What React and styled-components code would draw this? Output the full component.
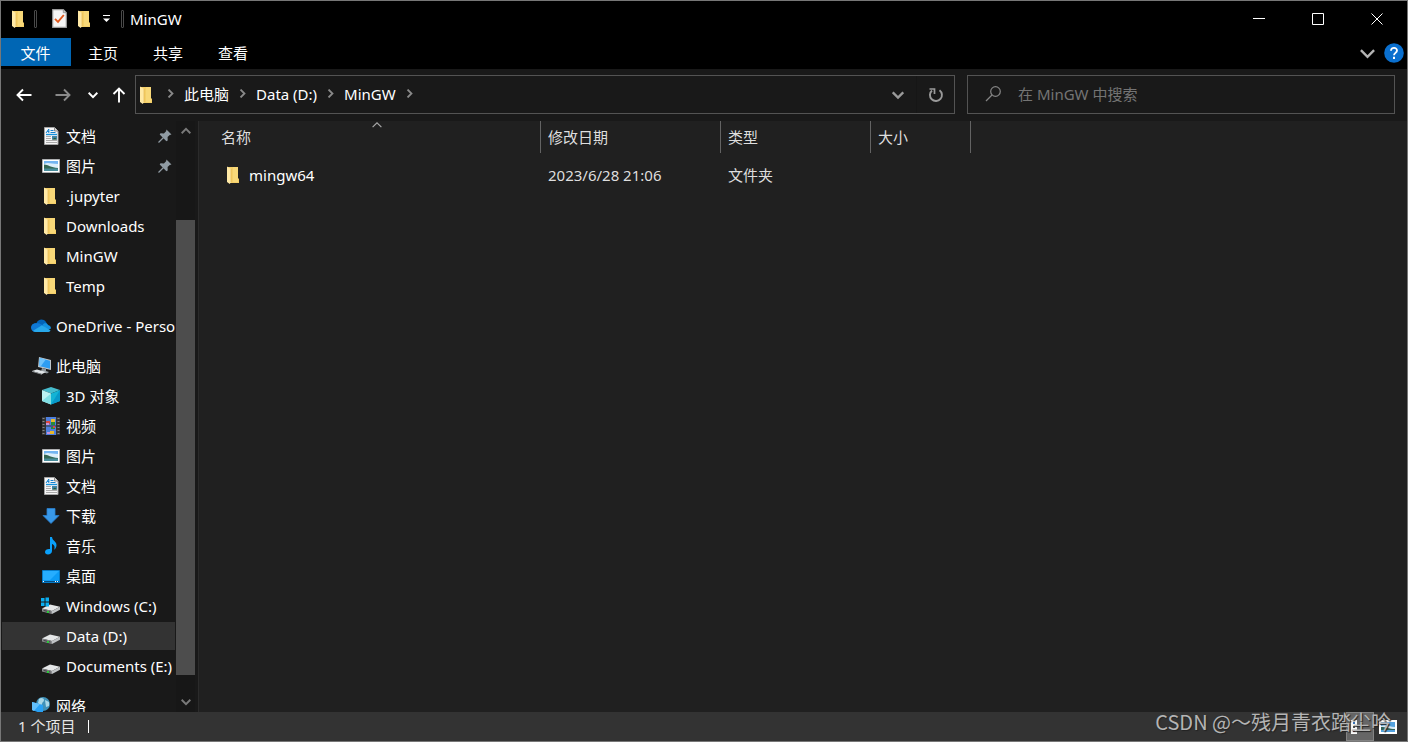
import React from "react";
import styled, { createGlobalStyle, css } from "styled-components";

const GlobalStyle = createGlobalStyle`
  * {
    box-sizing: border-box;
  }

  body {
    margin: 0;
    background: #202020;
  }

  body,
  button,
  input {
    font-family: "Noto Sans", "Noto Sans CJK SC", sans-serif;
    font-size: 15px;
    line-height: 20px;
    color: #ffffff;
  }

  svg {
    display: block;
    flex-shrink: 0;
  }
`;

const Window = styled.div`
  position: relative;
  display: flex;
  flex-direction: column;
  height: 100vh;
  border: 1px solid #777777;
  background: #202020;
  overflow: hidden;
`;

const PlainButton = styled.button`
  display: flex;
  align-items: center;
  justify-content: center;
  padding: 0;
  border: 0;
  background: none;
`;

const TitleBar = styled.header`
  display: flex;
  flex-shrink: 0;
  height: 37px;
  background: #000000;
`;

const QuickAccess = styled.div`
  display: flex;
  flex: 1;
  align-items: center;
  padding: 0 0 2px 8px;
`;

const QuickButton = styled(PlainButton)`
  width: ${({ $width }) => $width || 20}px;
  height: 24px;
`;

const Grip = styled.span`
  width: 3px;
  height: 18px;
  margin: 0 ${({ $right }) => $right}px 0 ${({ $left }) => $left}px;
  border: 1px solid #4a4a4a;
  border-radius: 1px;
`;

const Title = styled.h1`
  margin: 0;
  font-size: 15px;
  line-height: 20px;
  font-weight: 400;
`;

const CaptionButton = styled(PlainButton)`
  width: 59px;
  height: 37px;
  padding: 0 1px 1px 0;
`;

const Ribbon = styled.nav`
  display: flex;
  flex-shrink: 0;
  height: 31px;
  background: #000000;
`;

const Tab = styled(PlainButton)`
  width: ${({ $active }) => ($active ? 70 : 65)}px;
  height: 28px;
  padding: 2px 1px 0 0;
  background: ${({ $active }) => ($active ? "#0066b4" : "none")};
`;

const RibbonTools = styled.div`
  display: flex;
  align-items: center;
  gap: 9px;
  height: 30px;
  margin-left: auto;
  padding-right: 3px;
`;

const Toolbar = styled.div`
  display: flex;
  flex-shrink: 0;
  align-items: center;
  height: 52px;
  padding: 0 12px 1px 3px;
  background: #191919;
`;

const NavButton = styled(PlainButton)`
  width: ${({ $width }) => $width}px;
  height: 39px;
`;

const fieldStyles = css`
  display: flex;
  align-items: center;
  height: 39px;
  border: 1px solid #535353;
`;

const AddressBar = styled.div`
  ${fieldStyles}
  flex: 1;
  min-width: 0;
  margin: 0 12px 0 1px;
  padding-left: 1px;
`;

const Crumbs = styled.ol`
  display: flex;
  flex: 1;
  align-items: center;
  min-width: 0;
  margin: 0;
  padding: 0 0 2px;
  overflow: hidden;
  list-style: none;
  white-space: nowrap;
`;

const Crumb = styled.li`
  display: flex;
  align-items: center;
`;

const CrumbLink = styled.a`
  color: #ffffff;
  text-decoration: none;
`;

const CrumbArrow = styled.span`
  display: flex;
  justify-content: center;
  width: 27px;
`;

const AddressButton = styled(PlainButton)`
  width: 38px;
  height: 37px;
  border-left: 1px solid ${({ $divided }) => ($divided ? "#161616" : "transparent")};
`;

const SearchBox = styled.label`
  ${fieldStyles}
  flex: 0 1 428px;
  gap: 16px;
  padding: 0 16px 2px;
`;

const SearchInput = styled.input`
  flex: 1;
  min-width: 0;
  height: 24px;
  padding: 0;
  border: 0;
  outline: 0;
  background: none;

  &::placeholder {
    color: #747474;
    opacity: 1;
  }
`;

const Main = styled.div`
  display: flex;
  flex: 1;
  min-height: 0;
`;

const Sidebar = styled.aside`
  display: flex;
  flex-shrink: 0;
  width: 198px;
  border-right: 1px solid #2b2b2b;
  background: #191919;
`;

const Tree = styled.div`
  display: flex;
  flex: 1;
  flex-direction: column;
  gap: 10px;
  min-width: 0;
  overflow: hidden;
`;

const TreeGroup = styled.ul`
  flex-shrink: 0;
  margin: 0;
  padding: 0;
  list-style: none;
`;

const TreeItem = styled.li`
  padding: 1px;
`;

const TreeLink = styled.a`
  display: flex;
  align-items: center;
  gap: 5px;
  height: 28px;
  padding-left: ${({ $nested }) => ($nested ? 39 : 29)}px;
  background: ${({ $selected }) => ($selected ? "#333333" : "none")};
  color: #ffffff;
  text-decoration: none;
  white-space: nowrap;
`;

const PinSlot = styled.span`
  margin: 0 3px 0 auto;
`;

const Scrollbar = styled.div`
  display: flex;
  flex-direction: column;
  width: 19px;
  margin-right: 3px;
  background: #171717;
`;

const ScrollButton = styled(PlainButton)`
  height: 20px;
`;

const Track = styled.div`
  display: flex;
  flex: 1;
  flex-direction: column;
`;

const TrackSpace = styled.div`
  flex: ${({ $share }) => $share};
`;

const Thumb = styled.div`
  flex: 455;
  background: #4d4d4d;
`;

const Content = styled.main`
  flex: 1;
  min-width: 0;
  padding-left: 15px;
`;

const FileTable = styled.table`
  table-layout: fixed;
  width: 757px;
  border-collapse: separate;
  border-spacing: 0;
  color: #dedede;
`;

const HeadCell = styled.th`
  position: relative;
  width: ${({ $width }) => $width}px;
  height: 32px;
  padding: 0 0 0 7px;
  border-right: 1px solid #636363;
  font-weight: 400;
  text-align: left;
`;

const SortMark = styled.span`
  position: absolute;
  top: -1px;
  left: 0;
  right: 0;
  display: flex;
  justify-content: center;
`;

const Cell = styled.td`
  height: 44px;
  padding: 0 0 0 7px;
`;

const FileName = styled.a`
  display: flex;
  align-items: center;
  gap: 5px;
  padding-left: 3px;
  color: #ffffff;
  text-decoration: none;
`;

const StatusBar = styled.footer`
  display: flex;
  flex-shrink: 0;
  align-items: center;
  height: 29px;
  padding: 0 5px 0 17px;
  background: #333333;
`;

const Count = styled.span`
  padding: 0 13px 2px 0;
  color: #e6e6e6;
`;

const StatusDivider = styled.span`
  width: 1px;
  height: 13px;
  margin-right: auto;
  background: #ffffff;
`;

const ViewButton = styled(PlainButton)`
  width: 28px;
  height: 29px;
  border: 1px solid ${({ $active }) => ($active ? "#838383" : "transparent")};
  background: ${({ $active }) => ($active ? "#666666" : "none")};
`;

const Watermark = styled.span`
  position: absolute;
  right: 16px;
  bottom: 5px;
  font-family: "Noto Sans CJK SC", sans-serif;
  font-size: 20px;
  line-height: 28px;
  color: #b4b4b4;
  text-shadow: 1px 1px 1px #222222;
  white-space: nowrap;
  pointer-events: none;
`;

const Chevron = ({ direction = "right", size = 9, color = "#8a8a8a", weight = 2 }) => {
  const turn = { right: 0, down: 90, up: -90 }[direction];
  return (
    <svg width={size} height={size} viewBox="0 0 10 10">
      <path
        d="M2.8.6 7.2 5 2.8 9.4"
        transform={`rotate(${turn} 5 5)`}
        fill="none"
        stroke={color}
        strokeWidth={weight}
      />
    </svg>
  );
};

const FolderIcon = () => (
  <svg width="20" height="20" viewBox="0 0 20 20">
    <path d="M3 2h11v11.5h1v4.500H5z" fill="#f4cf68" />
    <path d="M9 2h5v15H9z" fill="#f8d878" />
    <path d="M3 1.5 7 4v13l-1.200 2L3 17z" fill="#ffe9a6" />
    <path d="M7 4v13" stroke="#dfae48" strokeWidth=".6" />
  </svg>
);

const CheckPageIcon = () => (
  <svg width="15" height="19" viewBox="0 0 15 19">
    <path d="M.7.7h10.6l3 3v14.6H.7z" fill="#f5f5f5" stroke="#9b9b9b" strokeWidth="1.2" />
    <path d="M11.3.7v3h3" fill="#ccc" stroke="#8d8d8d" strokeWidth=".8" />
    <path d="m3 9.8 3 3L11.8 6" fill="none" stroke="#e2581c" strokeWidth="1.9" />
  </svg>
);

const DocumentIcon = () => (
  <svg width="20" height="20" viewBox="0 0 20 20">
    <path d="M3.500 1.500h10L17 5v13.500H3.500z" fill="#f7f7f7" stroke="#a5a5a5" />
    <path d="M13.500 1.500V5H17" fill="#d5d5d5" stroke="#777" strokeWidth=".8" />
    <path d="m5 7 2.800-4v4M6.200 5.500h2M9.500 4.500h3M9.500 6.500h5" fill="none" stroke="#1582ce" />
    <path d="M5 8.500h11" stroke="#1593df" strokeWidth="1.400" />
    <path d="M5 10.500h5M5 12.500h5M5 14.500h11M5 16.500h11" stroke="#a2a2a2" strokeWidth=".9" />
    <path d="M11 10h5v3.500h-5z" fill="#3f86aa" />
    <path d="m11 13.500 3-2 2 2z" fill="#285936" />
  </svg>
);

const PictureIcon = () => (
  <svg width="20" height="20" viewBox="0 0 20 20">
    <path d="M1.500 3.500h17v13h-17z" fill="#fff" stroke="#aeb0b2" />
    <path d="M3 5h14v10H3z" fill="#74b5f2" />
    <path d="M3 8c4-2 7 0 14 0v4H3z" fill="#dceefb" />
    <path d="M3 8.500c4 .2 7 3 14 3.500v1.500H3z" fill="#356855" />
    <path d="M3 12.500h14V15H3z" fill="#488d9b" />
  </svg>
);

const CloudIcon = () => (
  <svg width="20" height="20" viewBox="0 0 20 20">
    <path d="M1 12.5C0 9 3 6.5 5.5 7 7 3.5 12 2 15 6l1 2-9 8H4c-2 0-3-1.5-3-3.500z" fill="#0364b8" />
    <path d="M5 7.500c3-1 5 .5 7 2L3 15.500C1 15 0 13 0 11.500 0 9 2 7.300 5 7.500z" fill="#0f78d4" />
    <path d="M11.500 9c1-2.500 5-2 5.500 0 2 .2 3 2 3 3.500l-4 2z" fill="#1490df" />
    <path d="m2 14.800 9-5.500 8.600 5.200c-.7 1-1.800 1.500-3 1.500H5c-1.200 0-2.200-.4-3-1.200z" fill="#28a8ea" />
  </svg>
);

const ComputerIcon = () => (
  <svg width="20" height="20" viewBox="0 0 20 20">
    <path d="m8 1 12 3v10L7 11z" fill="#c0c7cc" />
    <path d="m8.800 2 10.200 2.700v8L8 10z" fill="#2d9df2" />
    <path d="m8.800 2 6 1.500-5 6.800L8 10z" fill="#70c3fb" />
    <path d="m11 12 4 1v2l3 1-2 1.500-6-2z" fill="#929a9f" />
    <path d="m1 15 5-1.500 9 2.500-4 2z" fill="#e1e5e8" />
    <path d="m1 15 10 3v.8L1 15.800z" fill="#9ba0a4" />
  </svg>
);

const CubeIcon = () => (
  <svg width="20" height="20" viewBox="0 0 20 20">
    <path d="m10 1 9 3-9 3.500L1 4z" fill="#46bccd" />
    <path d="m1 4 9 3.500v11L1 15z" fill="#bbf2f2" />
    <path d="m1 15 9-7.500v11z" fill="#81dfe4" />
    <path d="m19 4-9 3.500v11l9-3.500z" fill="#13b3d5" />
    <path d="m19 4-9 14.500 9-3.500z" fill="#0798c9" />
  </svg>
);

const FilmIcon = () => (
  <svg width="20" height="20" viewBox="0 0 20 20">
    <path d="M1 1h18v18H1z" fill="#333" />
    <path d="M2.500 2v16M17.500 2v16" stroke="#858585" strokeWidth="2" strokeDasharray="1 2" />
    <path d="M5 1h10v8.500H5zM5 10.500h10V19H5z" fill="#4e7fdc" />
    <path d="M10 3h4v3h-4zM9 15h4v3H9z" fill="#e9b82c" />
    <path d="M10 6h4v3h-4zM10 11h4v2h-4z" fill="#278b38" />
    <path d="M5 5h4v3H5zM12 10h2v2h-2z" fill="#d84a41" />
    <path d="M5 7h3v2H5zM6 16h3v2H6z" fill="#c693d9" />
  </svg>
);

const DownloadIcon = () => (
  <svg width="20" height="20" viewBox="0 0 20 20">
    <path d="M6 2.500h8v7h4L10 17.500 2 9.500h4z" fill="#3898e8" stroke="#2a7fce" strokeWidth=".8" />
  </svg>
);

const MusicIcon = () => (
  <svg width="20" height="20" viewBox="0 0 20 20">
    <path
      d="M9 1h2c.4 4 4.500 4.300 4.500 8 0 2-1 4-2.200 4.700.8-3.700-.3-5-2.300-5.700V15c0 2-2 3.500-4 3.500S4 17.500 4 16c0-2 2.500-3.400 5-2.900z"
      fill="#0aa0fa"
    />
  </svg>
);

const DesktopIcon = () => (
  <svg width="20" height="20" viewBox="0 0 20 20">
    <path d="M1.500 4.500h17v12h-17z" fill="#0c9bf5" stroke="#067bc9" />
    <path d="M2 5h16L9 14H2z" fill="#26adff" />
    <path d="M2 15.500h16" stroke="#064b7c" />
    <path d="M2 15.500h1M14 15.500h1M16 15.500h1" stroke="#fff" />
  </svg>
);

const DriveIcon = ({ windows }) => (
  <svg width="20" height="20" viewBox="0 0 20 20">
    <path d="m1 12.500 8-4 10 2.200-8 4.300z" fill="#e5e7e8" />
    <path d="m1 12.500 10 2.500v3L1 15.500z" fill="#8b8d8f" />
    <path d="m19 10.700-8 4.300v3l8-4.300z" fill="#c1c4c6" />
    <path d="m2.500 13.800 7 1.800v1.200l-7-1.800z" fill="#454749" />
    <path d="M6 14.900h2V17H6z" fill="#2fc83b" />
    {windows && (
      <path d="M0 2h3.500v3.500H0zM4.500 1.500H8v4H4.500zM0 6.500h3.500V10H0zM4.500 6.500H8v4H4.500z" fill="#0aaef0" />
    )}
  </svg>
);

const NetworkIcon = () => (
  <svg width="20" height="20" viewBox="0 0 20 20">
    <circle cx="12" cy="8" r="7" fill="#3f91b9" />
    <path d="M8 3c2-2 5-1 5 1s-2 2-2 4-3 1-4-1zM14 4l4 2v4l-3 1z" fill="#a9d7e7" />
    <path d="m1 6 11 3v9L1 14z" fill="#28a0f4" />
    <path d="m1 6 8 2-6 7-2-1z" fill="#61bffb" />
  </svg>
);

const PinIcon = () => (
  <svg width="14" height="14" viewBox="0 0 14 14">
    <path d="m8.500.5 5 5-1.800.4-2.100 2.200.1 3.400-1.300.8-6.700-6.700.8-1.300 3.400.1 2.200-2.100z" fill="#909ba3" />
    <path d="M5.500 8.500.5 13.500" stroke="#909ba3" strokeWidth="1.300" />
  </svg>
);

const ArrowIcon = ({ up, flip, color = "#ffffff" }) => (
  <svg width="16" height="16" viewBox="0 0 16 16">
    <path
      d="M15.500 8H1.500M7 2.500 1.500 8 7 13.500"
      transform={up ? "rotate(90 8 8)" : flip ? "rotate(180 8 8)" : undefined}
      fill="none"
      stroke={color}
      strokeWidth="1.900"
    />
  </svg>
);

const MenuArrowIcon = () => (
  <svg width="7" height="8" viewBox="0 0 7 8">
    <path d="M0 .5h7" stroke="#fff" />
    <path d="M0 3.500h7L3.500 7z" fill="#fff" />
  </svg>
);

const RefreshIcon = () => (
  <svg width="16" height="16" viewBox="0 0 16 16">
    <path d="M11.500 3.200A6 6 0 1 1 4 3.500" fill="none" stroke="#9a9a9a" strokeWidth="1.900" />
    <path d="M1.500 2h5v5" fill="none" stroke="#9a9a9a" strokeWidth="1.700" />
  </svg>
);

const SearchIcon = () => (
  <svg width="18" height="18" viewBox="0 0 18 18">
    <circle cx="11.500" cy="6.500" r="4.800" fill="none" stroke="#858585" strokeWidth="1.200" />
    <path d="m8 10-6 6" stroke="#858585" strokeWidth="1.300" />
  </svg>
);

const HelpIcon = () => (
  <svg width="20" height="20" viewBox="0 0 20 20">
    <circle cx="10" cy="10" r="9.800" fill="#0a6fce" />
    <path
      d="M7 7.700c0-4 6.200-3.500 6 0-.2 2.200-3 2.200-3 4.600"
      fill="none"
      stroke="#fff"
      strokeWidth="1.800"
    />
    <path d="M9 13.800h2V16H9z" fill="#fff" />
  </svg>
);

const CaptionIcon = ({ d }) => (
  <svg width="12" height="12" viewBox="0 0 12 12">
    <path d={d} fill="none" stroke="#ffffff" />
  </svg>
);

const DetailsIcon = () => (
  <svg width="18" height="16" viewBox="0 0 18 16">
    <path d="M0 1h6v14H0z" fill="#f8f8f8" />
    <path d="M2 3h2v2H2z" fill="#3b74b4" />
    <path d="M2 7h2v2H2z" fill="#505050" />
    <path d="M2 11h2v2H2z" fill="#c6382d" />
  </svg>
);

const LargeIconsIcon = () => (
  <svg width="18" height="14" viewBox="0 0 18 14">
    <path d="M0 0h18v14H0z" fill="#fff" />
    <path d="M2 2h14v10H2z" fill="#55a3df" />
    <path d="M2 6c5-2 8 1 14 1v2H2z" fill="#d7e9f5" />
    <path d="M2 7c5 0 8 2 14 2v1H2z" fill="#2f6257" />
  </svg>
);

const groups = [
  [
    { label: "文档", icon: <DocumentIcon />, pinned: true },
    { label: "图片", icon: <PictureIcon />, pinned: true },
    { label: ".jupyter", icon: <FolderIcon /> },
    { label: "Downloads", icon: <FolderIcon /> },
    { label: "MinGW", icon: <FolderIcon /> },
    { label: "Temp", icon: <FolderIcon /> },
  ],
  [{ label: "OneDrive - Personal", icon: <CloudIcon />, root: true }],
  [
    { label: "此电脑", icon: <ComputerIcon />, root: true },
    { label: "3D 对象", icon: <CubeIcon /> },
    { label: "视频", icon: <FilmIcon /> },
    { label: "图片", icon: <PictureIcon /> },
    { label: "文档", icon: <DocumentIcon /> },
    { label: "下载", icon: <DownloadIcon /> },
    { label: "音乐", icon: <MusicIcon /> },
    { label: "桌面", icon: <DesktopIcon /> },
    { label: "Windows (C:)", icon: <DriveIcon windows /> },
    { label: "Data (D:)", icon: <DriveIcon />, selected: true },
    { label: "Documents (E:)", icon: <DriveIcon /> },
  ],
  [{ label: "网络", icon: <NetworkIcon />, root: true }],
];

const columns = [
  { label: "名称", width: 327, sorted: true },
  { label: "修改日期", width: 180 },
  { label: "类型", width: 150 },
  { label: "大小", width: 100 },
];

const files = [{ name: "mingw64", modified: "2023/6/28 21:06", type: "文件夹", size: "" }];

const App = () => {
  return (
    <>
      <GlobalStyle />
      <Window>
        <TitleBar>
          <QuickAccess>
            <FolderIcon />
            <Grip $left={5} $right={12} />
            <QuickButton aria-label="属性">
              <CheckPageIcon />
            </QuickButton>
            <QuickButton $width={31} aria-label="新建文件夹">
              <FolderIcon />
            </QuickButton>
            <QuickButton $width={12} aria-label="自定义快速访问工具栏">
              <MenuArrowIcon />
            </QuickButton>
            <Grip $left={9} $right={6} />
            <Title>MinGW</Title>
          </QuickAccess>
          <CaptionButton aria-label="最小化">
            <CaptionIcon d="M0 5.500h12" />
          </CaptionButton>
          <CaptionButton aria-label="最大化">
            <CaptionIcon d="M.5.5h11v11H.5z" />
          </CaptionButton>
          <CaptionButton aria-label="关闭">
            <CaptionIcon d="m.5.5 11 11M11.500.5l-11 11" />
          </CaptionButton>
        </TitleBar>

        <Ribbon>
          <Tab $active>文件</Tab>
          <Tab>主页</Tab>
          <Tab>共享</Tab>
          <Tab>查看</Tab>
          <RibbonTools>
            <PlainButton aria-label="展开功能区">
              <Chevron direction="down" size={15} color="#b4b4b4" weight={1.6} />
            </PlainButton>
            <PlainButton aria-label="帮助">
              <HelpIcon />
            </PlainButton>
          </RibbonTools>
        </Ribbon>

        <Toolbar>
          <NavButton $width={39} aria-label="后退">
            <ArrowIcon />
          </NavButton>
          <NavButton $width={39} aria-label="前进">
            <ArrowIcon flip color="#8a8a8a" />
          </NavButton>
          <NavButton $width={21} aria-label="最近浏览的位置">
            <Chevron direction="down" size={10} color="#ffffff" />
          </NavButton>
          <NavButton $width={31} aria-label="向上">
            <ArrowIcon up />
          </NavButton>
          <AddressBar>
            <FolderIcon />
            <Crumbs>
              {["此电脑", "Data (D:)", "MinGW"].map((name) => (
                <Crumb key={name}>
                  <CrumbArrow>
                    <Chevron />
                  </CrumbArrow>
                  <CrumbLink href="#">{name}</CrumbLink>
                </Crumb>
              ))}
              <CrumbArrow>
                <Chevron />
              </CrumbArrow>
            </Crumbs>
            <AddressButton aria-label="上一个位置">
              <Chevron direction="down" size={12} color="#9a9a9a" />
            </AddressButton>
            <AddressButton $divided aria-label="刷新">
              <RefreshIcon />
            </AddressButton>
          </AddressBar>
          <SearchBox>
            <SearchIcon />
            <SearchInput aria-label="搜索" placeholder="在 MinGW 中搜索" />
          </SearchBox>
        </Toolbar>

        <Main>
          <Sidebar>
            <Tree>
              {groups.map((items, index) => (
                <TreeGroup key={index}>
                  {items.map((item) => (
                    <TreeItem key={item.label}>
                      <TreeLink href="#" $nested={!item.root} $selected={item.selected}>
                        {item.icon}
                        {item.label}
                        {item.pinned && (
                          <PinSlot>
                            <PinIcon />
                          </PinSlot>
                        )}
                      </TreeLink>
                    </TreeItem>
                  ))}
                </TreeGroup>
              ))}
            </Tree>
            <Scrollbar>
              <ScrollButton aria-label="向上滚动">
                <Chevron direction="up" size={10} color="#7a7a7a" />
              </ScrollButton>
              <Track>
                <TrackSpace $share={79} />
                <Thumb />
                <TrackSpace $share={17} />
              </Track>
              <ScrollButton aria-label="向下滚动">
                <Chevron direction="down" size={10} color="#7a7a7a" />
              </ScrollButton>
            </Scrollbar>
          </Sidebar>

          <Content>
            <FileTable>
              <thead>
                <tr>
                  {columns.map((column) => (
                    <HeadCell key={column.label} $width={column.width}>
                      {column.sorted && (
                        <SortMark>
                          <Chevron direction="up" size={10} color="#a8a8a8" weight={1.2} />
                        </SortMark>
                      )}
                      {column.label}
                    </HeadCell>
                  ))}
                </tr>
              </thead>
              <tbody>
                {files.map((file) => (
                  <tr key={file.name}>
                    <Cell>
                      <FileName href="#">
                        <FolderIcon />
                        {file.name}
                      </FileName>
                    </Cell>
                    <Cell>{file.modified}</Cell>
                    <Cell>{file.type}</Cell>
                    <Cell>{file.size}</Cell>
                  </tr>
                ))}
              </tbody>
            </FileTable>
          </Content>
        </Main>

        <StatusBar>
          <Count>1 个项目</Count>
          <StatusDivider />
          <ViewButton $active aria-label="详细信息">
            <DetailsIcon />
          </ViewButton>
          <ViewButton aria-label="大图标">
            <LargeIconsIcon />
          </ViewButton>
        </StatusBar>
        <Watermark>CSDN @～残月青衣踏尘吟</Watermark>
      </Window>
    </>
  );
};

export default App;
